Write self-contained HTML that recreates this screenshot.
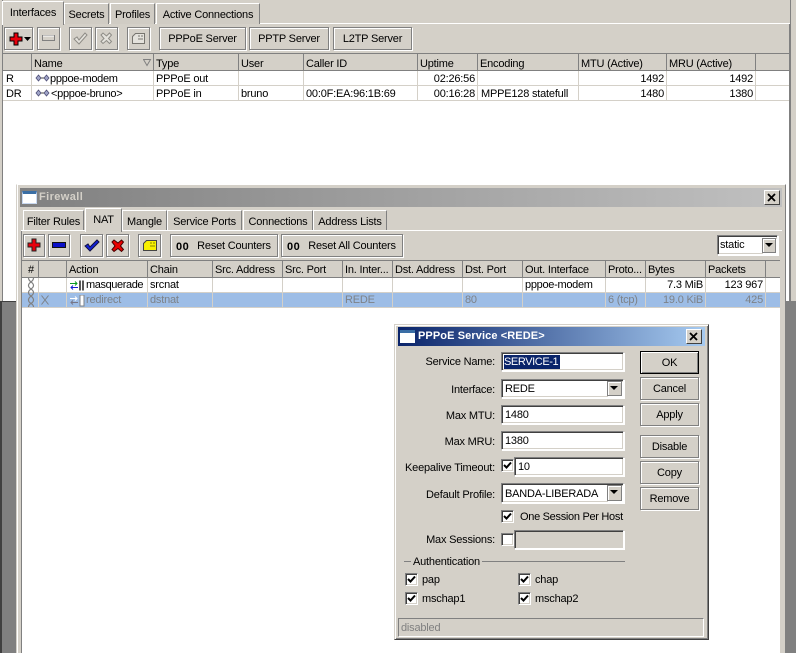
<!DOCTYPE html>
<html><head><meta charset="utf-8"><style>
html,body{margin:0;padding:0}
body{width:796px;height:653px;overflow:hidden;position:relative;background:#d4d0c8;font:11px/14px "Liberation Sans",sans-serif;color:#000;letter-spacing:-.2px}
div,span,svg{position:absolute;box-sizing:border-box}
.t{white-space:pre;margin-top:1px}
.r{text-align:right}
.g{color:#7d8288}
.b{border:1px solid #808080;box-shadow:1px 1px 0 #fff,inset 1px 1px 0 #fff;background:#d4d0c8;text-align:center;white-space:pre;line-height:23px}
.tab{background:#d0ccc4;border:1px solid #fff;border-right:1px solid #808080;border-bottom:0;text-align:center;white-space:pre;line-height:22px}
.act{background:#d4d0c8;border-right:1px solid #808080;z-index:2}
.i{background:#fff;border:1px solid;border-color:#808080 #fff #fff #808080;box-shadow:1px 1px 0 #fff,inset 1px 1px 0 #404040,inset -1px -1px 0 #d4d0c8;white-space:pre;line-height:19px;padding-left:3px}
.c{background:#fff;border:1px solid;border-color:#808080 #fff #fff #808080;box-shadow:inset 1px 1px 0 #404040,inset -1px -1px 0 #d4d0c8;width:13px;height:13px}
.l{text-align:right;white-space:pre;width:120px}
.v{width:1px;background:#808080}
.w{width:1px;background:#d4d0c8}
.h{height:1px;background:#808080}
</style></head><body>

<!-- main window -->
<div style="left:2px;top:0;width:1px;height:301px;background:#808080"></div>
<div style="left:3px;top:70px;width:786px;height:231px;background:#fff"></div>
<div style="left:2px;top:23px;width:788px;height:1px;background:#fff"></div>
<div style="left:789px;top:24px;width:1px;height:277px;background:#808080"></div>
<div style="left:790px;top:0;width:1px;height:301px;background:#808080"></div>
<div style="left:0;top:301px;width:16px;height:352px;background:#808080"></div>
<div style="left:0;top:301px;width:2px;height:352px;background:#404040"></div>
<div style="left:0;top:301px;width:16px;height:1px;background:#404040"></div>
<div style="left:786px;top:301px;width:10px;height:352px;background:#808080"></div>

<!-- top tabs -->
<div class="tab" style="left:64px;top:3px;width:45px;height:21px">Secrets</div>
<div class="tab" style="left:110px;top:3px;width:45px;height:21px">Profiles</div>
<div class="tab" style="left:156px;top:3px;width:104px;height:21px">Active Connections</div>
<div class="tab act" style="left:2px;top:1px;width:62px;height:24px;line-height:23px">Interfaces</div>

<!-- top toolbar -->
<div class="b" style="left:4px;top:27px;width:29px;height:23px"></div>
<svg style="left:9px;top:32px" width="22" height="14"><path d="M5 1h4v4h4v4H9v4H5V9H1V5h4z" fill="#e8000c" stroke="#000"/><path d="M15 5h7l-3.500 4z"/></svg>
<div class="b" style="left:37px;top:27px;width:23px;height:23px"></div>
<svg style="left:42px;top:35px" width="14" height="7"><rect x=".5" y=".5" width="12" height="5" fill="#d4d0c8" stroke="#808080"/><path d="M1 1h11" stroke="#fff"/></svg>
<div class="b" style="left:69px;top:27px;width:23px;height:23px"></div>
<svg style="left:73px;top:32px" width="15" height="13"><path d="M1 7l3-2 2 3 6-7 2 2-8 9z" fill="#e4e2dc" stroke="#8e8c86"/></svg>
<div class="b" style="left:95px;top:27px;width:23px;height:23px"></div>
<svg style="left:100px;top:32px" width="13" height="13"><path d="M1 3l2-2 3.500 3 3-3 2 2-3 3.500 3 3-2 2-3-3-3.500 3-2-2 3-3z" fill="#e4e2dc" stroke="#8e8c86"/></svg>
<div class="b" style="left:127px;top:27px;width:23px;height:23px"></div>
<svg style="left:131px;top:32px" width="16" height="13"><path d="M1.500 11.500v-7l3-3h9v10z" fill="#e4e2dc" stroke="#77756f"/><path d="M7 4h2m1 0h2M7 7h5" stroke="#77756f"/></svg>
<div class="b" style="left:159px;top:27px;width:87px;height:23px">PPPoE Server</div>
<div class="b" style="left:249px;top:27px;width:80px;height:23px">PPTP Server</div>
<div class="b" style="left:333px;top:27px;width:79px;height:23px">L2TP Server</div>

<!-- top table -->
<div class="h" style="left:3px;top:53px;width:786px"></div>
<div class="h" style="left:3px;top:70px;width:786px"></div>
<div class="v" style="left:31px;top:54px;height:16px"></div>
<div class="v" style="left:153px;top:54px;height:16px"></div>
<div class="v" style="left:238px;top:54px;height:16px"></div>
<div class="v" style="left:303px;top:54px;height:16px"></div>
<div class="v" style="left:417px;top:54px;height:16px"></div>
<div class="v" style="left:477px;top:54px;height:16px"></div>
<div class="v" style="left:578px;top:54px;height:16px"></div>
<div class="v" style="left:666px;top:54px;height:16px"></div>
<div class="v" style="left:755px;top:54px;height:16px"></div>
<div class="w" style="left:31px;top:71px;height:29px"></div>
<div class="w" style="left:153px;top:71px;height:29px"></div>
<div class="w" style="left:238px;top:71px;height:29px"></div>
<div class="w" style="left:303px;top:71px;height:29px"></div>
<div class="w" style="left:417px;top:71px;height:29px"></div>
<div class="w" style="left:477px;top:71px;height:29px"></div>
<div class="w" style="left:578px;top:71px;height:29px"></div>
<div class="w" style="left:666px;top:71px;height:29px"></div>
<div class="w" style="left:755px;top:71px;height:29px"></div>
<div style="left:3px;top:85px;width:786px;height:1px;background:#d4d0c8"></div>
<div style="left:3px;top:100px;width:786px;height:1px;background:#d4d0c8"></div>
<svg style="left:143px;top:59px" width="9" height="8"><path d="M.5.500h7l-3.500 6z" fill="none" stroke="#808080"/></svg>
<span class="t" style="left:34px;top:56px">Name</span>
<span class="t" style="left:156px;top:56px">Type</span>
<span class="t" style="left:241px;top:56px">User</span>
<span class="t" style="left:306px;top:56px">Caller ID</span>
<span class="t" style="left:420px;top:56px">Uptime</span>
<span class="t" style="left:480px;top:56px">Encoding</span>
<span class="t" style="left:581px;top:56px">MTU (Active)</span>
<span class="t" style="left:669px;top:56px">MRU (Active)</span>

<span class="t" style="left:6px;top:71px">R</span>
<svg style="left:35px;top:74px" width="15" height="9"><path d="M3.500 1L1 4l2.500 3L6 4zM11.500 1L9 4l2.500 3L14 4z" fill="#a0a4c8" stroke="#505078" stroke-width=".8"/><path d="M6 4h3" stroke="#444"/></svg>
<span class="t" style="left:50px;top:71px;letter-spacing:-.3px">pppoe-modem</span>
<span class="t" style="left:156px;top:71px">PPPoE out</span>
<span class="t r" style="left:400px;width:75px;top:71px">02:26:56</span>
<span class="t r" style="left:600px;width:64px;top:71px">1492</span>
<span class="t r" style="left:690px;width:63px;top:71px">1492</span>

<span class="t" style="left:6px;top:86px">DR</span>
<svg style="left:35px;top:89px" width="15" height="9"><path d="M3.500 1L1 4l2.500 3L6 4zM11.500 1L9 4l2.500 3L14 4z" fill="#a0a4c8" stroke="#505078" stroke-width=".8"/><path d="M6 4h3" stroke="#444"/></svg>
<span class="t" style="left:51px;top:86px;letter-spacing:-.3px">&lt;pppoe-bruno&gt;</span>
<span class="t" style="left:156px;top:86px">PPPoE in</span>
<span class="t" style="left:241px;top:86px">bruno</span>
<span class="t" style="left:306px;top:86px">00:0F:EA:96:1B:69</span>
<span class="t r" style="left:400px;width:75px;top:86px">00:16:28</span>
<span class="t" style="left:481px;top:86px">MPPE128 statefull</span>
<span class="t r" style="left:600px;width:64px;top:86px">1480</span>
<span class="t r" style="left:690px;width:63px;top:86px">1380</span>

<!-- firewall window -->
<div style="left:16px;top:184px;width:770px;height:469px;background:#d4d0c8;border-top:1px solid #fff;border-right:1px solid #808080;border-left:1px solid #d4d0c8"></div>
<div style="left:17px;top:185px;width:1px;height:468px;background:#fff"></div>
<div style="left:20px;top:188px;width:762px;height:19px;background:linear-gradient(90deg,#808080,#c0c0c0)"></div>
<div style="left:22px;top:191px;width:15px;height:13px;background:#fff;border:1px solid #c8d8f0;border-top:3px solid #3a6ea5"></div>
<span class="t" style="left:39px;top:189px;font-weight:bold;color:#d4d0c8;letter-spacing:.4px">Firewall</span>
<div style="left:764px;top:190px;width:16px;height:15px;background:#d4d0c8;border:1px solid #404040;border-color:#fff #404040 #404040 #fff"></div>
<svg style="left:767px;top:193px" width="10" height="9"><path d="M1 1l7 7M8 1L1 8" stroke="#000" stroke-width="1.800"/></svg>

<div class="tab" style="left:23px;top:210px;width:61px;height:21px">Filter Rules</div>
<div class="tab" style="left:122px;top:210px;width:45px;height:21px">Mangle</div>
<div class="tab" style="left:167px;top:210px;width:75px;height:21px">Service Ports</div>
<div class="tab" style="left:243px;top:210px;width:70px;height:21px">Connections</div>
<div class="tab" style="left:313px;top:210px;width:74px;height:21px">Address Lists</div>
<div style="left:21px;top:230px;width:761px;height:1px;background:#fff"></div>
<div class="tab act" style="left:85px;top:208px;width:37px;height:24px;line-height:22px">NAT</div>
<div style="left:21px;top:231px;width:1px;height:422px;background:#808080"></div>
<div style="left:22px;top:278px;width:758px;height:375px;background:#fff"></div>

<div class="b" style="left:23px;top:234px;width:22px;height:23px"></div>
<svg style="left:27px;top:238px" width="15" height="15"><path d="M5 1h4v4h4v4H9v4H5V9H1V5h4z" fill="#e8000c" stroke="#222"/></svg>
<div class="b" style="left:48px;top:234px;width:22px;height:23px"></div>
<svg style="left:52px;top:242px" width="15" height="7"><rect x=".5" y=".5" width="13" height="5" fill="#0a10c8" stroke="#111"/></svg>
<div class="b" style="left:80px;top:234px;width:23px;height:23px"></div>
<svg style="left:84px;top:239px" width="16" height="13"><path d="M1 7l3-2 2 3 7-7 2 2-9 9z" fill="#1222d8" stroke="#101040"/></svg>
<div class="b" style="left:106px;top:234px;width:23px;height:23px"></div>
<svg style="left:111px;top:239px" width="14" height="14"><path d="M1 3l2-2 4 3 3.500-3 2 2-3 4 3 3.500-2 2-3.500-3-4 3-2-2 3-3.500z" fill="#e80000" stroke="#400"/></svg>
<div class="b" style="left:138px;top:234px;width:23px;height:23px"></div>
<svg style="left:142px;top:239px" width="16" height="13"><path d="M1.500 11.500v-7l3-3h10v10z" fill="#f8f000" stroke="#444"/><path d="M8 4h2m1 0h2M8 7h5" stroke="#888800"/></svg>
<div class="b" style="left:170px;top:234px;width:108px;height:23px;padding-left:20px">Reset Counters</div>
<span class="t" style="left:176px;top:239px;font-weight:bold;letter-spacing:.5px">00</span>
<div class="b" style="left:281px;top:234px;width:122px;height:23px;padding-left:20px">Reset All Counters</div>
<span class="t" style="left:287px;top:239px;font-weight:bold;letter-spacing:.5px">00</span>

<div class="i" style="left:717px;top:235px;width:61px;height:20px;line-height:19px;padding-left:2px">static</div>
<div class="b" style="left:762px;top:238px;width:14px;height:15px;border-color:#808080"></div>
<svg style="left:765px;top:243px" width="9" height="5"><path d="M0 0h8L4 4z"/></svg>

<!-- fw table -->
<div class="h" style="left:22px;top:260px;width:758px"></div>
<div class="h" style="left:22px;top:277px;width:758px"></div>
<div class="v" style="left:38px;top:261px;height:16px"></div>
<div class="v" style="left:66px;top:261px;height:16px"></div>
<div class="v" style="left:147px;top:261px;height:16px"></div>
<div class="v" style="left:212px;top:261px;height:16px"></div>
<div class="v" style="left:282px;top:261px;height:16px"></div>
<div class="v" style="left:342px;top:261px;height:16px"></div>
<div class="v" style="left:392px;top:261px;height:16px"></div>
<div class="v" style="left:462px;top:261px;height:16px"></div>
<div class="v" style="left:522px;top:261px;height:16px"></div>
<div class="v" style="left:605px;top:261px;height:16px"></div>
<div class="v" style="left:645px;top:261px;height:16px"></div>
<div class="v" style="left:705px;top:261px;height:16px"></div>
<div class="v" style="left:765px;top:261px;height:16px"></div>
<div style="left:22px;top:293px;width:758px;height:14px;background:#9dbde6"></div>
<div style="left:22px;top:292px;width:758px;height:1px;background:#d4d0c8"></div>
<div style="left:22px;top:307px;width:758px;height:1px;background:#d4d0c8"></div>
<div class="w" style="left:38px;top:278px;height:29px"></div>
<div class="w" style="left:66px;top:278px;height:29px"></div>
<div class="w" style="left:147px;top:278px;height:29px"></div>
<div class="w" style="left:212px;top:278px;height:29px"></div>
<div class="w" style="left:282px;top:278px;height:29px"></div>
<div class="w" style="left:342px;top:278px;height:29px"></div>
<div class="w" style="left:392px;top:278px;height:29px"></div>
<div class="w" style="left:462px;top:278px;height:29px"></div>
<div class="w" style="left:522px;top:278px;height:29px"></div>
<div class="w" style="left:605px;top:278px;height:29px"></div>
<div class="w" style="left:645px;top:278px;height:29px"></div>
<div class="w" style="left:705px;top:278px;height:29px"></div>
<div class="w" style="left:765px;top:278px;height:29px"></div>

<span class="t" style="left:28px;top:262px">#</span>
<span class="t" style="left:69px;top:262px">Action</span>
<span class="t" style="left:150px;top:262px">Chain</span>
<span class="t" style="left:215px;top:262px">Src. Address</span>
<span class="t" style="left:285px;top:262px">Src. Port</span>
<span class="t" style="left:345px;top:262px">In. Inter...</span>
<span class="t" style="left:395px;top:262px">Dst. Address</span>
<span class="t" style="left:465px;top:262px">Dst. Port</span>
<span class="t" style="left:525px;top:262px">Out. Interface</span>
<span class="t" style="left:608px;top:262px">Proto...</span>
<span class="t" style="left:648px;top:262px">Bytes</span>
<span class="t" style="left:708px;top:262px">Packets</span>

<svg style="left:26px;top:278px" width="11" height="29"><path d="M2.500 0c0 4 5 4 5 7.500s-5 3.500-5 7 5 3.500 5 7.500-5 3-5 7M7.500 0c0 4-5 4-5 7.500s5 3.500 5 7-5 3.500-5 7.500 5 3 5 7" fill="none" stroke="#808080" stroke-width="1.200"/></svg>
<svg style="left:70px;top:280px" width="15" height="12"><path d="M0 3.500h7M5 1.500l2 2-2 2" fill="none" stroke="#0a9a20"/><path d="M8 7.500H1M3 5.500l-2 2 2 2" fill="none" stroke="#1420d0"/><path d="M10 .5v10M13 .5v10" stroke="#111" stroke-width="1.400"/></svg>
<span class="t" style="left:86px;top:277px;letter-spacing:-.4px">masquerade</span>
<span class="t" style="left:150px;top:277px">srcnat</span>
<span class="t" style="left:525px;top:277px;letter-spacing:-.3px">pppoe-modem</span>
<span class="t r" style="left:640px;width:63px;top:277px">7.3 MiB</span>
<span class="t r" style="left:700px;width:63px;top:277px">123 967</span>

<svg style="left:41px;top:295px" width="9" height="10"><path d="M.5.500l7 9M7.500.500l-7 9" stroke="#7d8288" fill="none"/></svg>
<svg style="left:70px;top:295px" width="15" height="12"><path d="M0 3.500h7M5 1.500l2 2-2 2" fill="none" stroke="#fff"/><path d="M8 7.500H1M3 5.500l-2 2 2 2" fill="none" stroke="#778"/><rect x="10" y="0" width="4" height="11" fill="#fff" stroke="#7d8288"/></svg>
<span class="t g" style="left:86px;top:292px">redirect</span>
<span class="t g" style="left:150px;top:292px">dstnat</span>
<span class="t g" style="left:345px;top:292px">REDE</span>
<span class="t g" style="left:465px;top:292px">80</span>
<span class="t g" style="left:608px;top:292px">6 (tcp)</span>
<span class="t g r" style="left:640px;width:63px;top:292px">19.0 KiB</span>
<span class="t g r" style="left:700px;width:63px;top:292px">425</span>

<!-- dialog -->
<div style="left:394px;top:324px;width:315px;height:316px;background:#d4d0c8;border:1px solid;border-color:#d4d0c8 #404040 #404040 #d4d0c8;box-shadow:inset 1px 1px 0 #fff,inset -1px -1px 0 #808080"></div>
<div style="left:398px;top:327px;width:307px;height:19px;background:linear-gradient(90deg,#0a246a,#a6caf0)"></div>
<div style="left:400px;top:330px;width:15px;height:13px;background:#fff;border-top:3px solid #3a6ea5"></div>
<span class="t" style="left:418px;top:328px;font-weight:bold;color:#fff;letter-spacing:.1px">PPPoE Service &lt;REDE&gt;</span>
<div style="left:686px;top:329px;width:16px;height:15px;background:#d4d0c8;border:1px solid;border-color:#fff #404040 #404040 #fff"></div>
<svg style="left:689px;top:332px" width="10" height="9"><path d="M1 1l7 7M8 1L1 8" stroke="#000" stroke-width="1.800"/></svg>

<span class="t l" style="left:375px;top:354px">Service Name:</span>
<span class="t l" style="left:375px;top:382px">Interface:</span>
<span class="t l" style="left:375px;top:408px">Max MTU:</span>
<span class="t l" style="left:375px;top:434px">Max MRU:</span>
<span class="t l" style="left:375px;top:460px">Keepalive Timeout:</span>
<span class="t l" style="left:375px;top:487px">Default Profile:</span>
<span class="t l" style="left:375px;top:532px">Max Sessions:</span>

<div class="i" style="left:501px;top:352px;width:123px;height:19px"></div>
<span class="t" style="left:504px;top:354px;width:56px;height:14px;background:#0a246a;color:#fff;letter-spacing:-.4px">SERVICE-1</span>
<div class="i" style="left:501px;top:379px;width:123px;height:19px">REDE</div>
<div class="b" style="left:607px;top:381px;width:15px;height:15px;border-color:#808080"></div>
<svg style="left:610px;top:386px" width="9" height="5"><path d="M0 0h8L4 4z"/></svg>
<div class="i" style="left:501px;top:405px;width:123px;height:19px">1480</div>
<div class="i" style="left:501px;top:431px;width:123px;height:19px">1380</div>
<div class="c" style="left:501px;top:459px"></div>
<svg style="left:503px;top:461px" width="10" height="9"><path d="M1 4l2.500 2.500L8 1.500" fill="none" stroke="#000" stroke-width="2"/></svg>
<div class="i" style="left:514px;top:457px;width:110px;height:19px">10</div>
<div class="i" style="left:501px;top:483px;width:123px;height:20px;line-height:20px">BANDA-LIBERADA</div>
<div class="b" style="left:607px;top:485px;width:15px;height:16px;border-color:#808080"></div>
<svg style="left:610px;top:490px" width="9" height="5"><path d="M0 0h8L4 4z"/></svg>

<div class="c" style="left:501px;top:510px"></div>
<svg style="left:503px;top:512px" width="10" height="9"><path d="M1 4l2.500 2.500L8 1.500" fill="none" stroke="#000" stroke-width="2"/></svg>
<span class="t" style="left:520px;top:509px;letter-spacing:-.3px">One Session Per Host</span>
<div class="c" style="left:501px;top:533px"></div>
<div class="i" style="left:514px;top:530px;width:110px;height:19px;background:#d4d0c8"></div>

<div style="left:404px;top:561px;width:221px;height:1px;background:#808080"></div>
<span class="t" style="left:411px;top:554px;background:#d4d0c8;padding:0 2px">Authentication</span>

<div class="c" style="left:405px;top:573px"></div>
<svg style="left:407px;top:575px" width="10" height="9"><path d="M1 4l2.500 2.500L8 1.500" fill="none" stroke="#000" stroke-width="2"/></svg>
<span class="t" style="left:422px;top:572px">pap</span>
<div class="c" style="left:518px;top:573px"></div>
<svg style="left:520px;top:575px" width="10" height="9"><path d="M1 4l2.500 2.500L8 1.500" fill="none" stroke="#000" stroke-width="2"/></svg>
<span class="t" style="left:535px;top:572px">chap</span>
<div class="c" style="left:405px;top:592px"></div>
<svg style="left:407px;top:594px" width="10" height="9"><path d="M1 4l2.500 2.500L8 1.500" fill="none" stroke="#000" stroke-width="2"/></svg>
<span class="t" style="left:422px;top:591px">mschap1</span>
<div class="c" style="left:518px;top:592px"></div>
<svg style="left:520px;top:594px" width="10" height="9"><path d="M1 4l2.500 2.500L8 1.500" fill="none" stroke="#000" stroke-width="2"/></svg>
<span class="t" style="left:535px;top:591px">mschap2</span>

<div class="b" style="left:640px;top:351px;width:59px;height:23px;border-color:#000;box-shadow:inset 1px 1px 0 #fff,inset -1px -1px 0 #808080">OK</div>
<div class="b" style="left:640px;top:377px;width:59px;height:23px">Cancel</div>
<div class="b" style="left:640px;top:403px;width:59px;height:23px">Apply</div>
<div class="b" style="left:640px;top:435px;width:59px;height:23px">Disable</div>
<div class="b" style="left:640px;top:461px;width:59px;height:23px">Copy</div>
<div class="b" style="left:640px;top:487px;width:59px;height:23px">Remove</div>

<div style="left:398px;top:618px;width:306px;height:19px;border:1px solid;border-color:#808080 #fff #fff #808080;line-height:19px;padding-left:2px;color:#808080;white-space:pre">disabled</div>
</body></html>
